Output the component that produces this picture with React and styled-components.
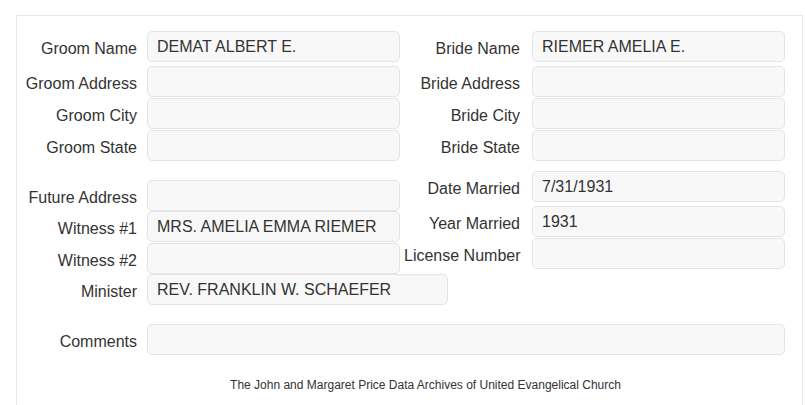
import React from "react";
import styled, { createGlobalStyle } from "styled-components";

const Global = createGlobalStyle`
  html, body { margin: 0; padding: 0; background: #ffffff; }
  body { font-family: "Liberation Sans", Arial, sans-serif; color: #333333; }
  * { box-sizing: border-box; }
`;

const Panel = styled.div`
  margin: 15px 3px 0 16px;
  width: 787px;
  min-height: 400px;
  border: 1px solid #e6e6e6;
  border-bottom: none;
  padding-top: 15px;
`;

const Columns = styled.div`
  display: grid;
  grid-template-columns: 383px 381px;
  column-gap: 4px;
`;

const Stack = styled.div`
  display: flex;
  flex-direction: column;
`;

const Row = styled.div`
  display: grid;
  grid-template-columns: ${(p) => p.$label}px ${(p) => p.$input}px;
  column-gap: ${(p) => p.$gap}px;
  align-items: center;
  margin-top: ${(p) => p.$mt || 0}px;
`;

const Label = styled.label`
  text-align: right;
  font-size: 16px;
  line-height: 18px;
  padding-top: 5px;
  color: #333333;
  white-space: nowrap;
`;

const Field = styled.input`
  height: 31px;
  width: 100%;
  border: 1px solid #e4e4e4;
  border-radius: 5px;
  background: #f8f8f8;
  padding: 0 9px;
  font-family: "Liberation Sans", Arial, sans-serif;
  font-size: 16px;
  color: #333333;
  outline: none;
`;

const Footer = styled.div`
  margin-top: 23px;
  padding-left: 32px;
  text-align: center;
  font-size: 12px;
  line-height: 14px;
  color: #333333;
`;

function FieldRow({ label, value = "", side = "left", inputWidth = 253, mt }) {
  const labelW = side === "left" ? 120 : 116;
  const gap = side === "left" ? 10 : 12;
  return (
    <Row $label={labelW} $input={inputWidth} $gap={gap} $mt={mt}>
      <Label>{label}</Label>
      <Field readOnly value={value} />
    </Row>
  );
}

export default function App() {
  return (
    <>
      <Global />
      <Panel>
        <Columns>
          <Stack>
            <FieldRow label="Groom Name" value="DEMAT ALBERT E." />
            <FieldRow label="Groom Address" mt={4} />
            <FieldRow label="Groom City" mt={1} />
            <FieldRow label="Groom State" mt={1} />
            <FieldRow label="Future Address" mt={19} />
            <FieldRow label="Witness #1" value="MRS. AMELIA EMMA RIEMER" mt={0} />
            <FieldRow label="Witness #2" mt={1} />
            <FieldRow label="Minister" value="REV. FRANKLIN W. SCHAEFER" inputWidth={301} mt={0} />
          </Stack>
          <Stack>
            <FieldRow side="right" label="Bride Name" value="RIEMER AMELIA E." />
            <FieldRow side="right" label="Bride Address" mt={4} />
            <FieldRow side="right" label="Bride City" mt={1} />
            <FieldRow side="right" label="Bride State" mt={1} />
            <FieldRow side="right" label="Date Married" value="7/31/1931" mt={10} />
            <FieldRow side="right" label="Year Married" value="1931" mt={4} />
            <FieldRow side="right" label="License Number" mt={1} />
          </Stack>
        </Columns>
        <FieldRow label="Comments" inputWidth={638} mt={19} />
        <Footer>The John and Margaret Price Data Archives of United Evangelical Church</Footer>
      </Panel>
    </>
  );
}
